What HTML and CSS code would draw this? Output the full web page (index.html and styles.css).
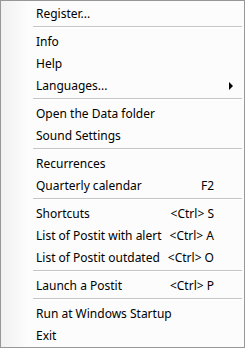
FILE: index.html
```html
<!DOCTYPE html>
<html lang="en">
<head>
  <meta charset="UTF-8" />
  <title>Menu</title>
  <link rel="stylesheet" href="styles.css">
</head>
<body>
  <div class="menu">
    <div class="item"><span class="label">Register...</span></div>
    <div class="sep"></div>
    <div class="item"><span class="label">Info</span></div>
    <div class="item"><span class="label">Help</span></div>
    <div class="item"><span class="label">Languages...</span><span class="arrow"></span></div>
    <div class="sep"></div>
    <div class="item"><span class="label">Open the Data folder</span></div>
    <div class="item"><span class="label">Sound Settings</span></div>
    <div class="sep"></div>
    <div class="item"><span class="label">Recurrences</span></div>
    <div class="item"><span class="label">Quarterly calendar</span><span class="key">F2</span></div>
    <div class="sep"></div>
    <div class="item"><span class="label">Shortcuts</span><span class="key">&lt;Ctrl&gt; S</span></div>
    <div class="item"><span class="label">List of Postit with alert</span><span class="key">&lt;Ctrl&gt; A</span></div>
    <div class="item"><span class="label">List of Postit outdated</span><span class="key">&lt;Ctrl&gt; O</span></div>
    <div class="sep"></div>
    <div class="item"><span class="label">Launch a Postit</span><span class="key">&lt;Ctrl&gt; P</span></div>
    <div class="sep"></div>
    <div class="item"><span class="label">Run at Windows Startup</span></div>
    <div class="item"><span class="label">Exit</span></div>
  </div>
</body>
</html>
```

FILE: styles.css
```css
body {
  margin: 0;
  font-family: "Noto Sans", "Open Sans", sans-serif;
  font-size: 12px;
  color: #000;
}

.menu {
  box-sizing: border-box;
  width: 245px;
  height: 348px;
  border: 1px solid #979797;
  padding: 1px 0;
  background: linear-gradient(to right, #f1f1f1 0, #fbfbfb 24px, #fcfcfc 24px) no-repeat;
  background-color: #fcfcfc;
}

.item {
  display: flex;
  align-items: center;
  height: 22px;
  padding: 0 30px 0 35px;
  position: relative;
}

.label {
  flex: 1;
  white-space: nowrap;
}

.key {
  white-space: nowrap;
}

.arrow {
  position: absolute;
  right: 11px;
  top: 8px;
  width: 0;
  height: 0;
  border-top: 4px solid transparent;
  border-bottom: 4px solid transparent;
  border-left: 4px solid #000;
}

.sep {
  height: 6px;
  margin-left: 32px;
  margin-right: 2px;
  display: flex;
  align-items: center;
}

.sep::before {
  content: "";
  display: block;
  width: 100%;
  height: 1px;
  background: #c5c5c5;
  border-bottom: 1px solid #fff;
}
```
